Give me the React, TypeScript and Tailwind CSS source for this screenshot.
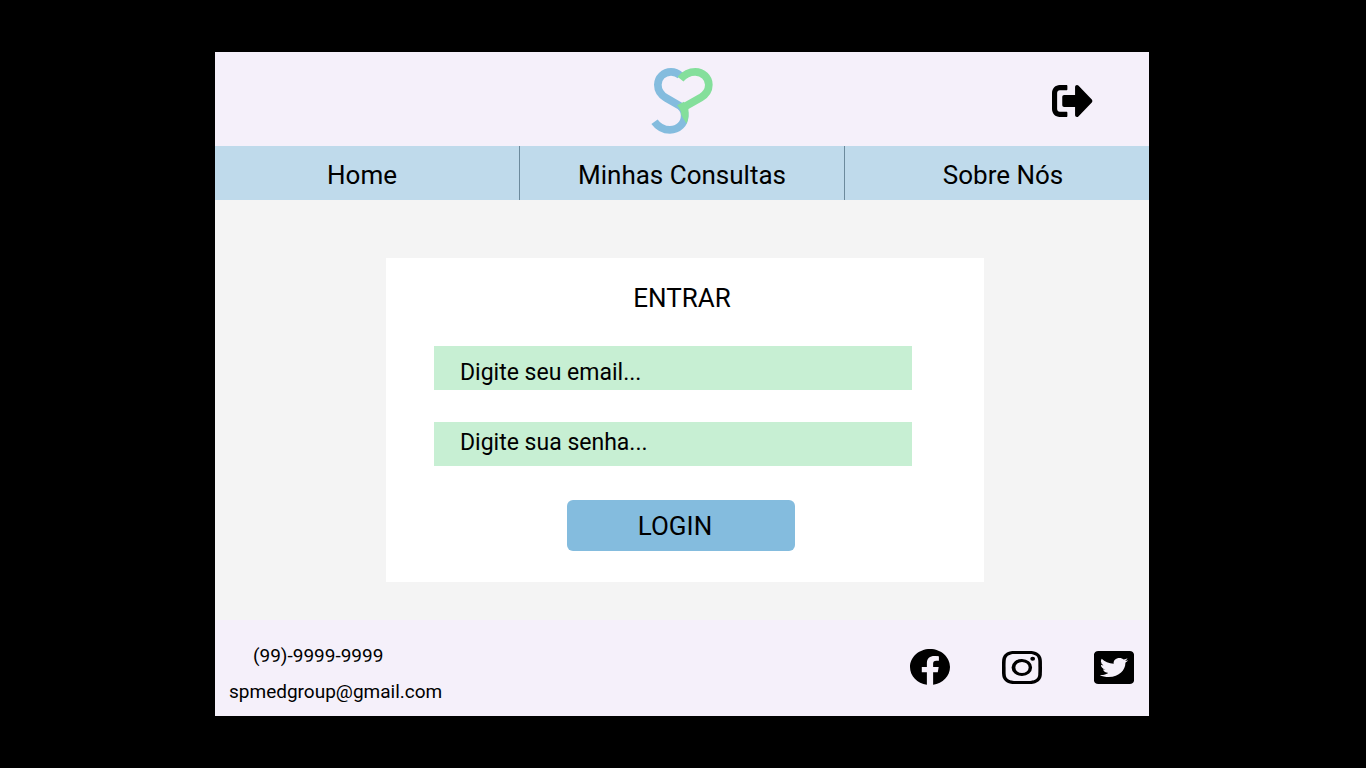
import React from "react";
import { FaFacebook, FaSignOutAlt, FaTwitterSquare } from "react-icons/fa";
import { BsInstagram } from "react-icons/bs";

function Logo() {
  return (
    <svg viewBox="33 51 189 204" className="h-17 w-[63px]" fill="none" role="img" aria-label="SP Medical Group">
      <path
        d="M121 76.500C113 69 104 65.500 93 65.500C71 65.500 53.500 83 53.500 104C53.500 121 62 134 78 143.500L120 168C130 175 134 186 134 197C134 221 115 239.500 90 239.500C71 239.500 55 231 43.500 215"
        stroke="#84bcde"
        strokeWidth="23"
      />
      <path
        d="M121.500 87.500C135 71 150 65.500 166 65.500C188 65.500 206.500 83 206.500 104C206.500 121 197 134 182 143L120 178"
        stroke="#84df9b"
        strokeWidth="23"
      />
      <path d="M111 166L132 155L145 176C147 193 146 208 139 221C133 209 127 203 124 194C124 184 119 173 111 166Z" fill="#84df9b" />
    </svg>
  );
}

const links = ["Home", "Minhas Consultas", "Sobre Nós"];

export default function App() {
  return (
    <div className="flex min-h-screen items-center justify-center bg-black pr-0.5 font-['Roboto',sans-serif] text-black">
      <div className="flex w-full max-w-[934px] flex-col bg-[#f4f4f4]">
        <header className="grid grid-cols-[1fr_auto_1fr] items-center bg-[#f5f0fa] pt-[15px] pb-[11px]">
          <a href="#inicio" className="col-start-2">
            <Logo />
          </a>
          <button type="button" aria-label="Sair" className="mr-14 justify-self-end">
            <FaSignOutAlt viewBox="0 64 512 384" preserveAspectRatio="none" className="h-8 w-[41px]" />
          </button>
        </header>

        <nav className="grid grid-cols-[305fr_325fr_304fr] divide-x divide-[#6c8a9c] bg-[#bfdaeb]">
          {links.map((label) => (
            <a key={label} href="#" className="flex h-[54px] items-center justify-center pt-1 pr-2.5 text-[26px] leading-8 last:pr-0 last:pl-3 even:pr-0">
              {label}
            </a>
          ))}
        </nav>

        <main className="pt-[58px] pr-4 pb-[38px] pl-[22px]">
          <form className="mx-auto flex w-full max-w-[598px] flex-col bg-white px-12 pt-6 pb-[31px]">
            <h1 className="pr-1.5 text-center text-[26px] leading-8">ENTRAR</h1>
            <input
              type="email"
              aria-label="Email"
              placeholder="Digite seu email..."
              className="mt-8 mr-6 h-11 bg-[#c7efd3] px-[26px] pt-2 text-[23px] placeholder:text-black"
            />
            <input
              type="password"
              aria-label="Senha"
              placeholder="Digite sua senha..."
              className="mt-8 mr-6 h-11 bg-[#c7efd3] px-[26px] pb-1 text-[23px] placeholder:text-black"
            />
            <button type="button" className="mt-[34px] mr-2 h-[51px] w-[228px] self-center rounded-md bg-[#84bcde] pr-3 text-[26px] leading-8">
              LOGIN
            </button>
          </form>
        </main>

        <footer className="flex items-start justify-between bg-[#f5f0fa] pt-6 pr-[15px] pb-3 pl-3.5">
          <address className="flex flex-col gap-3 text-[19px] leading-6 not-italic">
            <a href="tel:9999999999" className="pl-6">(99)-9999-9999</a>
            <a href="mailto:spmedgroup@gmail.com">spmedgroup@gmail.com</a>
          </address>
          <div className="flex items-center gap-[52px] pt-[5px]">
            <a href="#facebook" aria-label="Facebook">
              <FaFacebook viewBox="8 8 496 496" preserveAspectRatio="none" className="h-9 w-10" />
            </a>
            <a href="#instagram" aria-label="Instagram">
              <BsInstagram preserveAspectRatio="none" className="h-[33px] w-10" />
            </a>
            <a href="#twitter" aria-label="Twitter">
              <FaTwitterSquare viewBox="0 32 448 448" preserveAspectRatio="none" className="h-[33px] w-10" />
            </a>
          </div>
        </footer>
      </div>
    </div>
  );
}
